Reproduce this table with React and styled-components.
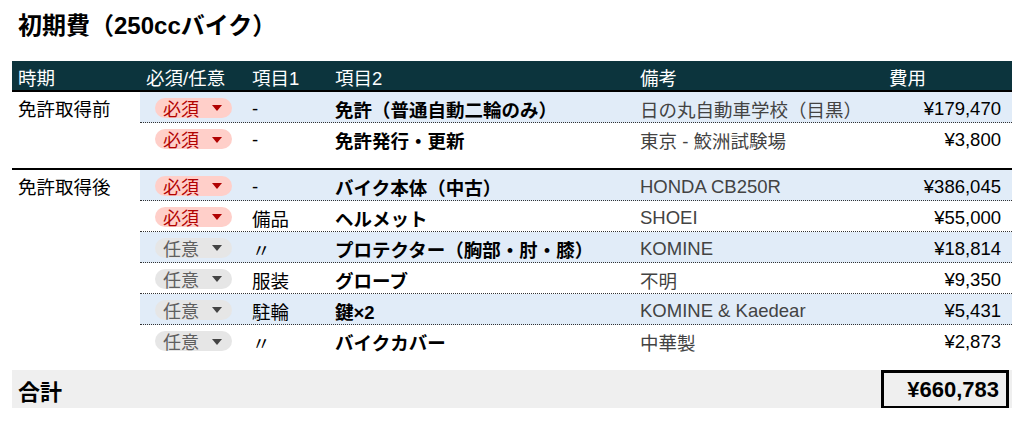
import React from "react";
import styled, { createGlobalStyle } from "styled-components";

const GlobalStyle = createGlobalStyle`
  body {
    margin: 0;
    background: #fff;
    font-family: "Liberation Sans", "Noto Sans CJK JP", sans-serif;
    color: #000;
  }
`;

const COLS = "128px 106px 83px 305px 249px 129px";
const SUB_COLS = "106px 83px 305px 249px 129px";

const Page = styled.div`
  width: 1000px;
  padding-left: 12px;
`;

const Title = styled.h1`
  margin: 0;
  padding: 12px 0 0 6px;
  height: 49px;
  font-size: 24px;
  line-height: 28px;
  font-weight: bold;
`;

const Header = styled.div`
  display: grid;
  grid-template-columns: ${COLS};
  height: 31px;
  box-sizing: border-box;
  background: #0c343d;
  border-bottom: 2px solid #000;
  color: #fff;
  font-size: 18.5px;
  div {
    padding: 3px 0 0 6px;
    display: flex;
    align-items: center;
  }
`;

const Group = styled.div`
  display: grid;
  grid-template-columns: 128px 1fr;
  padding-bottom: ${(p) => (p.$last ? "0" : "14px")};
  border-bottom: ${(p) => (p.$last ? "none" : "2px solid #000")};
`;

const Period = styled.div`
  padding: 7px 0 0 6px;
  font-size: 18.5px;
  line-height: 22px;
`;

const Row = styled.div`
  display: grid;
  grid-template-columns: ${SUB_COLS};
  height: 31px;
  box-sizing: border-box;
  background: ${(p) => (p.$shade ? "#e1ecf8" : "#fff")};
  border-bottom: ${(p) => (p.$dotted ? "1px dotted #333" : "none")};
`;

const Cell = styled.div`
  display: flex;
  align-items: center;
  padding: 3px ${(p) => (p.$right ? "11px" : "0")} 0 ${(p) => (p.$pill ? "15px" : "6px")};
  justify-content: ${(p) => (p.$right ? "flex-end" : "flex-start")};
  font-size: 18.5px;
  font-weight: ${(p) => (p.$bold ? "bold" : "normal")};
  color: ${(p) => (p.$muted ? "#434343" : "#000")};
  white-space: nowrap;
`;

const Pill = styled.span`
  display: inline-flex;
  align-items: center;
  justify-content: space-between;
  box-sizing: border-box;
  width: 77px;
  height: 20px;
  margin-top: -2px;
  padding: 0 10px 0 8px;
  border-radius: 10px;
  font-size: 18px;
  background: ${(p) => (p.$required ? "#ffcfc9" : "#e6e6e6")};
  color: ${(p) => (p.$required ? "#b10202" : "#5f5f5f")};
`;

const Caret = styled.span`
  width: 0;
  height: 0;
  margin-top: 1px;
  border-left: 5px solid transparent;
  border-right: 5px solid transparent;
  border-top: 6px solid ${(p) => (p.$required ? "#b10202" : "#444")};
`;

const TotalBar = styled.div`
  margin-top: 14px;
  height: 38px;
  background: #efefef;
  display: flex;
  align-items: center;
  justify-content: space-between;
`;

const TotalLabel = styled.span`
  padding: 2px 0 0 6px;
  font-size: 22px;
  font-weight: bold;
`;

const TotalBox = styled.div`
  box-sizing: border-box;
  width: 128px;
  height: 39px;
  margin-right: 3px;
  border: 3px solid #000;
  display: flex;
  align-items: center;
  justify-content: flex-end;
  padding: 2px 7px 0 0;
  font-size: 22px;
  font-weight: bold;
`;

const groups = [
  {
    period: "免許取得前",
    rows: [
      { req: true, item1: "-", item2: "免許（普通自動二輪のみ）", note: "日の丸自動車学校（目黒）", cost: "¥179,470" },
      { req: true, item1: "-", item2: "免許発行・更新", note: "東京 - 鮫洲試験場", cost: "¥3,800" },
    ],
  },
  {
    period: "免許取得後",
    rows: [
      { req: true, item1: "-", item2: "バイク本体（中古）", note: "HONDA CB250R", cost: "¥386,045" },
      { req: true, item1: "備品", item2: "ヘルメット", note: "SHOEI", cost: "¥55,000" },
      { req: false, item1: "〃", item2: "プロテクター（胸部・肘・膝）", note: "KOMINE", cost: "¥18,814" },
      { req: false, item1: "服装", item2: "グローブ", note: "不明", cost: "¥9,350" },
      { req: false, item1: "駐輪", item2: "鍵×2", note: "KOMINE & Kaedear", cost: "¥5,431" },
      { req: false, item1: "〃", item2: "バイクカバー", note: "中華製", cost: "¥2,873" },
    ],
  },
];

const App = () => {
  return (
    <Page>
      <GlobalStyle />
      <Title>初期費（250ccバイク）</Title>
      <Header>
        <div>時期</div>
        <div>必須/任意</div>
        <div>項目1</div>
        <div>項目2</div>
        <div>備考</div>
        <div>費用</div>
      </Header>
      {groups.map((g, gi) => (
        <Group key={g.period} $last={gi === groups.length - 1}>
          <Period>{g.period}</Period>
          <div>
            {g.rows.map((r, i) => (
              <Row key={r.item2} $shade={i % 2 === 0} $dotted={i < g.rows.length - 1}>
                <Cell $pill>
                  <Pill $required={r.req}>
                    {r.req ? "必須" : "任意"}
                    <Caret $required={r.req} />
                  </Pill>
                </Cell>
                <Cell>{r.item1}</Cell>
                <Cell $bold>{r.item2}</Cell>
                <Cell $muted>{r.note}</Cell>
                <Cell $right>{r.cost}</Cell>
              </Row>
            ))}
          </div>
        </Group>
      ))}
      <TotalBar>
        <TotalLabel>合計</TotalLabel>
        <TotalBox>¥660,783</TotalBox>
      </TotalBar>
    </Page>
  );
};

export default App;
